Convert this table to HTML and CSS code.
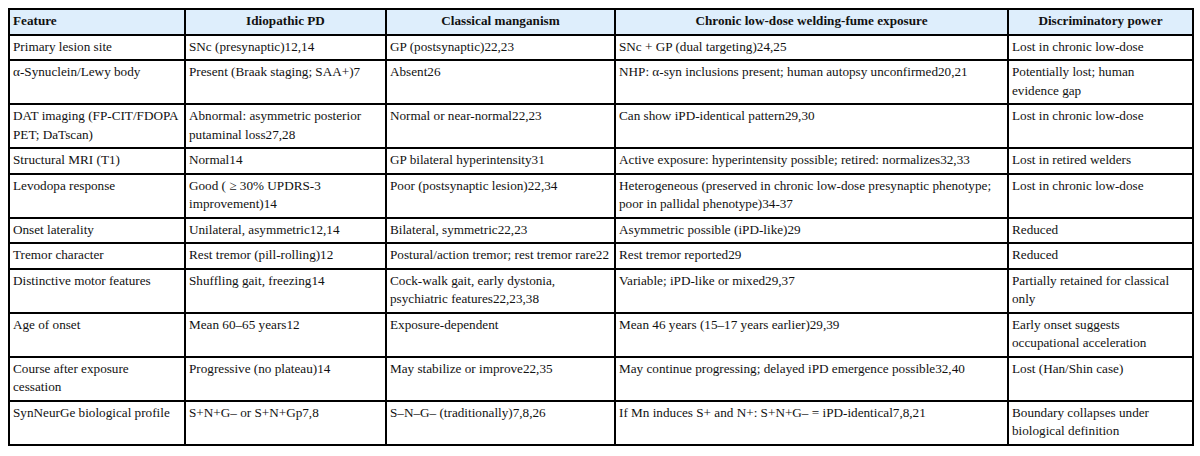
FILE: index.html
```html
<!DOCTYPE html>
<html>
<head>
<meta charset="utf-8">
<link rel="stylesheet" href="styles.css">
</head>
<body>
<table class="cmp">
<colgroup>
<col class="c1"><col class="c2"><col class="c3"><col class="c4"><col class="c5">
</colgroup>
<thead>
<tr><th class="left">Feature</th><th>Idiopathic PD</th><th>Classical manganism</th><th>Chronic low-dose welding-fume exposure</th><th>Discriminatory power</th></tr>
</thead>
<tbody>
<tr><td>Primary lesion site</td><td>SNc (presynaptic)12,14</td><td>GP (postsynaptic)22,23</td><td>SNc + GP (dual targeting)24,25</td><td>Lost in chronic low-dose</td></tr>
<tr><td>α-Synuclein/Lewy body</td><td>Present (Braak staging; SAA+)7</td><td>Absent26</td><td>NHP: α-syn inclusions present; human autopsy unconfirmed20,21</td><td>Potentially lost; human evidence gap</td></tr>
<tr><td>DAT imaging (FP-CIT/FDOPA PET; DaTscan)</td><td>Abnormal: asymmetric posterior putaminal loss27,28</td><td>Normal or near-normal22,23</td><td>Can show iPD-identical pattern29,30</td><td>Lost in chronic low-dose</td></tr>
<tr><td>Structural MRI (T1)</td><td>Normal14</td><td>GP bilateral hyperintensity31</td><td>Active exposure: hyperintensity possible; retired: normalizes32,33</td><td>Lost in retired welders</td></tr>
<tr><td>Levodopa response</td><td>Good ( ≥ 30% UPDRS-3 improvement)14</td><td>Poor (postsynaptic lesion)22,34</td><td>Heterogeneous (preserved in chronic low-dose presynaptic phenotype; poor in pallidal phenotype)34-37</td><td>Lost in chronic low-dose</td></tr>
<tr><td>Onset laterality</td><td>Unilateral, asymmetric12,14</td><td>Bilateral, symmetric22,23</td><td>Asymmetric possible (iPD-like)29</td><td>Reduced</td></tr>
<tr><td>Tremor character</td><td>Rest tremor (pill-rolling)12</td><td>Postural/action tremor; rest tremor rare22</td><td>Rest tremor reported29</td><td>Reduced</td></tr>
<tr><td>Distinctive motor features</td><td>Shuffling gait, freezing14</td><td>Cock-walk gait, early dystonia, psychiatric features22,23,38</td><td>Variable; iPD-like or mixed29,37</td><td>Partially retained for classical only</td></tr>
<tr><td>Age of onset</td><td>Mean 60–65 years12</td><td>Exposure-dependent</td><td>Mean 46 years (15–17 years earlier)29,39</td><td>Early onset suggests occupational acceleration</td></tr>
<tr><td>Course after exposure cessation</td><td>Progressive (no plateau)14</td><td>May stabilize or improve22,35</td><td>May continue progressing; delayed iPD emergence possible32,40</td><td>Lost (Han/Shin case)</td></tr>
<tr><td>SynNeurGe biological profile</td><td>S+N+G– or S+N+Gp7,8</td><td>S–N–G– (traditionally)7,8,26</td><td>If Mn induces S+ and N+: S+N+G– = iPD-identical7,8,21</td><td>Boundary collapses under biological definition</td></tr>
</tbody>
</table>
</body>
</html>
```

FILE: styles.css
```css
html, body {
  margin: 0;
  padding: 0;
  background: #ffffff;
}
body {
  padding: 8px;
  font-family: "Liberation Serif", "Times New Roman", serif;
  font-size: 13.2px;
  color: #111;
}
.cmp {
  border-collapse: collapse;
  table-layout: fixed;
  width: 1184px;
  border: 2px solid #000;
  font-family: "Liberation Serif", "Times New Roman", serif;
  font-size: 13.2px;
}
.c1 { width: 176px; }
.c2 { width: 201px; }
.c3 { width: 229px; }
.c4 { width: 393px; }
.c5 { width: 185px; }
.cmp th, .cmp td {
  font-family: "Liberation Serif", "Times New Roman", serif;
  border: 2px solid #000;
  padding: 2px 3px 3px 3px;
  line-height: 18.5px;
  vertical-align: top;
  text-align: left;
}
.cmp td:nth-child(1) { padding-right: 4px; }
.cmp td:nth-child(3) { padding-right: 2px; }
.cmp td:nth-child(5) { padding-right: 12px; }
.cmp th {
  background: #deeefc;
  font-weight: bold;
  text-align: center;
}
.cmp th.left {
  text-align: left;
}
```
